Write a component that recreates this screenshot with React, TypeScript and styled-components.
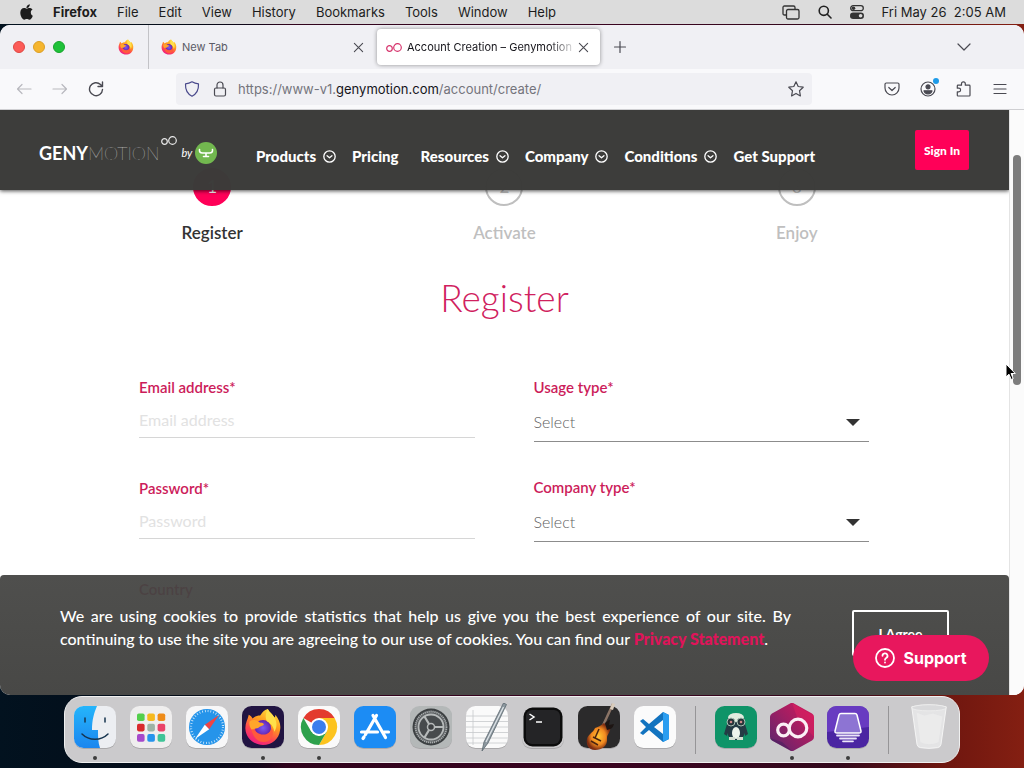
import React from "react";
import styled, { createGlobalStyle } from "styled-components";

const ui = `Inter, "Liberation Sans", sans-serif`;
const brand = `Lato, "Open Sans", sans-serif`;

const GlobalStyle = createGlobalStyle`
  *, *::before, *::after { box-sizing: border-box; }
  body { margin: 0; font-family: ${ui}; }
  button, input, select { font: inherit; color: inherit; border: 0; background: none; padding: 0; margin: 0; border-radius: 0; }
  a { color: inherit; text-decoration: none; }
  svg { display: block; flex: none; }
`;

/* ---------- Desktop and menu bar ---------- */

const Desktop = styled.div`
  display: flex;
  flex-direction: column;
  min-height: 100vh;
  padding-bottom: 5px;
  background: linear-gradient(90deg, #02121f 0%, #050c18 18%, #12081a 25%, #30031c 28%, #3a0420 60%, #34091c 82%, #6e160f 92%, #841f12 100%);
`;

const MenuBar = styled.header`
  display: flex;
  align-items: center;
  height: 24px;
  margin-bottom: 1px;
  padding: 0 18px 0 20px;
  background: #dcdcdc;
  color: #1c1c1c;
  font-size: 13px;
`;

const MenuList = styled.nav`
  display: flex;
  flex: 1;
  gap: 20px;
  margin-left: 20px;
`;

const MenuItem = styled.button<{ $strong?: boolean }>`
  font-weight: ${(p) => (p.$strong ? 700 : 400)};
`;

const StatusArea = styled.div`
  display: flex;
  align-items: center;
  gap: 18px;
  white-space: pre;
`;

/* ---------- Browser chrome ---------- */

const BrowserWindow = styled.main`
  display: flex;
  flex: 1;
  flex-direction: column;
  min-height: 0;
  overflow: hidden;
  border-radius: 10px;
  background: #fff;
`;

const TabStrip = styled.div`
  display: flex;
  align-items: center;
  height: 44px;
  background: #f0f0f4;
  font-size: 11px;
`;

const TrafficLights = styled.div`
  display: flex;
  gap: 8px;
  width: 104px;
  padding-left: 13px;
`;

const Light = styled.button<{ $color: string; $edge: string }>`
  width: 12px;
  height: 12px;
  border: 1px solid ${(p) => p.$edge};
  border-radius: 50%;
  background: ${(p) => p.$color};
`;

const PinnedTab = styled.button`
  display: grid;
  place-items: center;
  width: 45px;
  height: 44px;
  border-right: 1px solid #c3c3c7;
`;

const Tab = styled.div<{ $active?: boolean }>`
  display: flex;
  align-items: center;
  width: ${(p) => (p.$active ? 223 : 224)}px;
  height: 36px;
  margin-right: ${(p) => (p.$active ? 12 : 4)}px;
  padding: 0 ${(p) => (p.$active ? "11px 0 9px" : "9px 0 12px")};
  border-radius: 4px;
  background: ${(p) => (p.$active ? "#fff" : "transparent")};
  box-shadow: ${(p) => (p.$active ? "0 0 4px rgba(0, 0, 0, 0.4)" : "none")};
  color: ${(p) => (p.$active ? "#15141a" : "#5b5b66")};
`;

const TabTitle = styled.span<{ $fade?: boolean }>`
  flex: 1;
  margin: 0 4px 0 5px;
  overflow: hidden;
  white-space: nowrap;
  mask-image: ${(p) => (p.$fade ? "linear-gradient(90deg, #000 85%, transparent 102%)" : "none")};
`;

const IconButton = styled.button`
  display: grid;
  place-items: center;
  color: #4a4a52;
`;

const TabListButton = styled(IconButton)`
  margin-left: auto;
  margin-right: 52px;
`;

const Toolbar = styled.div`
  display: flex;
  align-items: center;
  gap: 72px;
  height: 41px;
  padding: 0 16px;
  border-bottom: 1px solid #cfcfd2;
  background: #f9f9fb;
`;

const ToolGroup = styled.div`
  display: flex;
  gap: 20px;
`;

const ToolButton = styled(IconButton)<{ $dim?: boolean }>`
  position: relative;
  width: 16px;
  height: 16px;
  color: ${(p) => (p.$dim ? "#b9b9be" : "#4a4a52")};
`;

const NoticeDot = styled.span`
  position: absolute;
  top: -3px;
  right: -3px;
  width: 6px;
  height: 6px;
  border-radius: 50%;
  background: #1e9be8;
`;

const AddressBar = styled.div`
  display: flex;
  flex: 1;
  align-items: center;
  gap: 12px;
  height: 32px;
  padding: 0 8px;
  border-radius: 4px;
  background: #f0f0f4;
`;

const Address = styled.div`
  flex: 1;
  margin-left: -2px;
  color: #74747c;
  font-size: 13px;
  white-space: nowrap;

  strong { color: #15141a; font-weight: 400; }
`;

/* ---------- Page ---------- */

const Viewport = styled.div`
  display: flex;
  flex: 1;
  min-height: 0;
`;

const Page = styled.div`
  position: relative;
  flex: 1;
  overflow: hidden;
  font-family: ${brand};
`;

const ScrollTrack = styled.div`
  width: 15px;
  padding: 45px 0 0 3px;
  border-left: 1px solid #e4e4e4;
  background: #fbfbfb;
`;

const ScrollThumb = styled.div`
  width: 8px;
  height: 230px;
  border-radius: 4px;
  background: #7d7d7d;
`;

const SiteHeader = styled.header`
  position: absolute;
  z-index: 1;
  top: 0;
  left: 0;
  right: 0;
  display: flex;
  align-items: center;
  height: 80px;
  padding: 0 40px 0 39px;
  background: rgba(59, 59, 57, 0.99);
  box-shadow: 0 1px 4px rgba(0, 0, 0, 0.7);
  color: #fff;
`;

const Logo = styled.a`
  display: flex;
  align-items: center;
  width: 217px;
  padding-top: 6px;
  font-size: 18px;
  line-height: 24px;
`;

const LogoBold = styled.span`
  font-weight: 700;
`;

const LogoThin = styled.span`
  font-weight: 200;
`;

const LogoRings = styled.span`
  align-self: flex-start;
  margin: -6px 4px 0 2px;
`;

const LogoBy = styled.em`
  margin-right: 3px;
  font-size: 11px;
`;

const SiteNav = styled.nav`
  display: flex;
  flex: 1;
  gap: 16px;
  padding-top: 12px;
  font-size: 15px;
  font-weight: 900;
  line-height: 20px;
  white-space: nowrap;
`;

const NavLink = styled.a`
  display: flex;
  align-items: center;
  padding-right: 6px;
`;

const NavMenu = styled.button`
  display: flex;
  align-items: center;
  gap: 7px;
`;

const SignIn = styled.button`
  width: 54px;
  height: 40px;
  border-radius: 2px;
  background: #ff0058;
  font-size: 12px;
  font-weight: 900;
`;

const Steps = styled.ol`
  display: grid;
  grid-template-columns: repeat(3, 1fr);
  margin: 0;
  padding: 58px 66px 0;
  list-style: none;
`;

const Step = styled.li<{ $active?: boolean }>`
  display: flex;
  flex-direction: column;
  align-items: center;
  gap: 17px;
  color: ${(p) => (p.$active ? "#333" : "#bfbfbf")};
  font-size: 17px;
  font-weight: 600;
  line-height: 20px;
`;

const StepNumber = styled.span<{ $active?: boolean }>`
  display: grid;
  place-items: center;
  width: 38px;
  height: 38px;
  border: 2px solid ${(p) => (p.$active ? "#ff0058" : "#bfbfbf")};
  border-radius: 50%;
  background: ${(p) => (p.$active ? "#ff0058" : "#fff")};
  color: ${(p) => (p.$active ? "#fff" : "#bfbfbf")};
  font-weight: 400;
`;

const Title = styled.h1`
  margin: 33px 0 57px;
  color: #d0215e;
  font-size: 37px;
  font-weight: 300;
  line-height: 44px;
  text-align: center;
`;

const Form = styled.form`
  display: grid;
  grid-template-columns: 1fr 1fr;
  gap: 59px;
  padding: 0 140px 0 139px;
`;

const Column = styled.div<{ $gap: number }>`
  display: flex;
  flex-direction: column;
  gap: ${(p) => p.$gap}px;
`;

const Field = styled.div`
  display: flex;
  flex-direction: column;
`;

const Label = styled.label`
  color: #cc1c5a;
  font-size: 15px;
  font-weight: 600;
  line-height: 20px;
`;

const TextInput = styled.input`
  width: 100%;
  height: 41px;
  padding-top: 5px;
  border-bottom: 1px solid #d6d6d6;
  font-size: 16px;

  &::placeholder { color: #e2e2e2; opacity: 1; }
`;

const SelectBox = styled.div`
  display: grid;
  align-items: center;

  > * { grid-area: 1 / 1; }
  > svg { justify-self: end; margin: 6px 9px 0 0; pointer-events: none; }
`;

const Select = styled.select`
  width: 100%;
  height: 45px;
  padding-top: 5px;
  appearance: none;
  border-bottom: 1px solid #8c8c8c;
  color: #5f5f5f;
  font-size: 16px;
  font-weight: 300;
`;

const CookieBar = styled.aside`
  position: absolute;
  left: 0;
  right: 0;
  bottom: 0;
  display: flex;
  align-items: flex-start;
  gap: 61px;
  height: 120px;
  padding: 29px 60px 0;
  border-radius: 4px 4px 0 0;
  background: linear-gradient(rgba(68, 68, 66, 0.94), rgba(66, 66, 64, 0.97));
  color: #fff;
`;

const CookieText = styled.p`
  flex: 1;
  margin: 0;
  font-size: 16px;
  font-weight: 500;
  line-height: 23px;
  text-align: justify;

  a { color: #e0135a; font-weight: 900; }
`;

const AgreeButton = styled.button`
  width: 97px;
  height: 46px;
  margin-top: 6px;
  border: 2px solid #fff;
  border-radius: 2px;
  font-size: 14px;
  font-weight: 700;
`;

const SupportButton = styled.button`
  position: absolute;
  right: 20px;
  bottom: 14px;
  display: flex;
  align-items: center;
  justify-content: center;
  gap: 8px;
  width: 136px;
  height: 46px;
  border-radius: 23px;
  background: #e8175d;
  color: #fff;
  font-family: Inter, sans-serif;
  font-size: 16px;
  font-weight: 700;
`;

const Pointer = styled.svg`
  position: absolute;
  z-index: 3;
  top: 363px;
  left: calc(100% - 19px);
`;

/* ---------- Dock ---------- */

const Dock = styled.nav`
  display: flex;
  align-self: center;
  align-items: center;
  height: 67px;
  margin-top: 1px;
  padding: 0 2px;
  border: 1px solid #f0f0f0;
  border-radius: 18px;
  background: #cbcacc;
`;

const DockItem = styled.button<{ $running?: boolean }>`
  display: flex;
  flex-direction: column;
  align-items: center;
  width: 56px;
  padding-top: 4px;

  &::after {
    content: "";
    width: 4px;
    height: 4px;
    margin-top: 5px;
    border-radius: 50%;
    background: ${(p) => (p.$running ? "#3d3d3d" : "transparent")};
  }
`;

const DockDivider = styled.span`
  width: 1px;
  height: 48px;
  margin: 0 12px;
  background: #969597;
`;

/* ---------- Drawings ---------- */

const Line = ({ size = 16, width = 1.2, children }: { size?: number; width?: number; children: React.ReactNode }) => (
  <svg width={size} height={size} viewBox="0 0 16 16" fill="none" stroke="currentColor" strokeWidth={width} strokeLinecap="round" strokeLinejoin="round">
    {children}
  </svg>
);

const Cross = () => <Line size={11} width={1.6}><path d="M2 2l12 12M14 2L2 14" /></Line>;

const AppleMark = () => (
  <svg width="13" height="16" viewBox="0 0 13 16" fill="#1c1c1c">
    <path d="M10.8 8.4c0-1.5 1-2.300 1.700-2.800-.7-1-1.800-1.500-3-1.500-1.200 0-2 .7-2.700.7-.7 0-1.600-.7-2.700-.7C2 4.200.3 5.900.3 8.800c0 3.200 2.100 6.900 4 6.900.9 0 1.400-.6 2.500-.6 1.100 0 1.500.6 2.500.6 1.500 0 2.900-2.200 3.500-4-1.300-.5-2-1.700-2-3.300zM8.900 2.900C9.500 2.200 9.900 1.300 9.800.3 8.800.4 7.900.9 7.300 1.600c-.6.7-1 1.500-.9 2.400 1 .1 1.900-.4 2.500-1.100z" />
  </svg>
);

const FirefoxMark = ({ size = 16 }: { size?: number }) => (
  <svg width={size} height={size} viewBox="0 0 40 40">
    <defs>
      <linearGradient id="foxBody" x1="0.8" y1="0" x2="0.3" y2="1">
        <stop offset="0" stopColor="#ffe63d" />
        <stop offset="0.4" stopColor="#ff9a1f" />
        <stop offset="0.7" stopColor="#ff4650" />
        <stop offset="1" stopColor="#ee1c84" />
      </linearGradient>
      <radialGradient id="foxGlobe">
        <stop offset="0" stopColor="#7a5cf5" />
        <stop offset="1" stopColor="#6422ad" />
      </radialGradient>
    </defs>
    <path fill="url(#foxBody)" d="M25 1c2 4 5 5 7 9 1-1 1-2 1-3 4 5 6 10 5 16-1 10-9 16-18 16S2 32 1.500 22C1 16 4 12 5 7c2 1 3 2 4 4 2-2 5-3 8-3 2-3 4-6 8-7z" />
    <circle cx="20" cy="21" r="8.500" fill="url(#foxGlobe)" />
    <path fill="#ffa62b" d="M6 14c3-2 7-2 10 1 2 1 4 0 5 2-1 2-5 2-6 4-3 1-5 0-6 3-3-3-4-7-3-10z" />
    <path fill="#ff5a3c" d="M8 22c4 1 6 6 12 6 5 0 8-3 9-7 3 5 1 11-4 14-8 3-16-3-17-13z" />
    <path fill="#ffe04a" d="M25 1c2 4 5 5 7 9 3 5 3 10 0 15-1-6-4-9-8-11-2-5-1-9 1-13z" />
  </svg>
);

const RingsMark = ({ color = "#d6336c" }: { color?: string }) => (
  <svg width="16" height="11" viewBox="0 0 16 11" fill="none" stroke={color} strokeWidth="1.2">
    <circle cx="3.500" cy="6.500" r="2.800" />
    <circle cx="11.500" cy="5.500" r="3.800" />
  </svg>
);

const CircleChevron = () => <Line size={13} width={1.6}><circle cx="8" cy="8" r="7" /><path d="M5 7l3 2.500L11 7" /></Line>;

const Tile = ({ fill, children }: { fill: string; children?: React.ReactNode }) => (
  <svg width="42" height="48" viewBox="0 -3 42 48">
    <rect y="1" width="42" height="42" rx="9.500" fill="#000" opacity=".16" />
    <rect width="42" height="42" rx="9.500" fill={fill} />
    {children}
  </svg>
);

const Finder = () => (
  <Tile fill="#eceef2">
    <linearGradient id="finderBlue" x1="0" y1="0" x2="0" y2="1">
      <stop offset="0" stopColor="#25b5fb" />
      <stop offset="1" stopColor="#1b86ef" />
    </linearGradient>
    <path fill="url(#finderBlue)" d="M9.500 0H23c-3 7-5 14-5 24h6c0 7 0 12 2 18H9.500A9.500 9.500 0 0 1 0 32.500v-23A9.500 9.500 0 0 1 9.500 0z" />
    <path fill="none" stroke="#16344f" strokeWidth="1.500" strokeLinecap="round" d="M11 12v4M31 12v4M8 28c7 7 19 7 26 0" />
  </Tile>
);

const launchpadColors = ["#54cf4c", "#f6b91e", "#ee8b18", "#d9292c", "#9eb3a5", "#ea4368", "#a64acb", "#2794ec", "#3fc497"];

const Launchpad = () => (
  <Tile fill="#efeeee">
    {launchpadColors.map((c, i) => (
      <rect key={c} x={7 + (i % 3) * 10.300} y={7.500 + Math.floor(i / 3) * 10.300} width="7.600" height="7.600" rx="1.800" fill={c} />
    ))}
  </Tile>
);

const Safari = () => (
  <Tile fill="#f7f7f8">
    <circle cx="21" cy="21" r="18" fill="#2594ea" />
    <circle cx="21" cy="21" r="16" fill="none" stroke="#d7ecfb" strokeWidth="2.200" strokeDasharray=".8 2" />
    <path fill="#ef4444" d="M33 9L18.800 18.800l4.400 4.400z" />
    <path fill="#fff" d="M9 33l14.200-9.800-4.400-4.400z" />
  </Tile>
);

const FirefoxApp = () => (
  <Tile fill="#211442"><g transform="translate(2 2)"><FirefoxMark size={38} /></g></Tile>
);

const Chrome = () => (
  <Tile fill="#fafafa">
    <path fill="#e33b2e" d="M21 21L5.400 12A18 18 0 0 1 36.600 12z" />
    <path fill="#fcc31e" d="M21 12h15.600A18 18 0 0 1 21 39L28.800 25.500z" />
    <path fill="#2da14c" d="M21 39A18 18 0 0 1 5.400 12L13.200 25.500 21 30l7.800-4.500z" />
    <circle cx="21" cy="21" r="9" fill="#fff" />
    <circle cx="21" cy="21" r="7" fill="#3b7ded" />
  </Tile>
);

const AppStore = () => (
  <Tile fill="#1c8cf4">
    <g fill="none" stroke="#fff" strokeWidth="3.200" strokeLinecap="round">
      <path d="M22.500 9.500L11.500 28.500M19 9.500l12.500 22M7.500 26h16M30 26h4.500M10 31l-1 1.500" />
    </g>
  </Tile>
);

const Settings = () => (
  <Tile fill="#b4b8b8">
    <circle cx="21" cy="21" r="18.500" fill="#3d4143" />
    <circle cx="21" cy="21" r="15.500" fill="#5b5f61" stroke="#a7abac" strokeWidth="1.800" strokeDasharray="1.300 .7" />
    <circle cx="21" cy="21" r="12.500" fill="#474b4d" stroke="#b6baba" strokeWidth="1.800" />
    <circle cx="21" cy="21" r="3.500" fill="#3e4143" stroke="#b6baba" strokeWidth="1.500" />
    <path stroke="#b6baba" strokeWidth="2.200" d="M24.500 21h9M19 18L14.500 10.500M19 24L14.500 31.500" />
  </Tile>
);

const TextEditApp = () => (
  <Tile fill="#fafafa">
    <path stroke="#c6c9cc" strokeWidth=".8" d="M0 10h42M0 15.500h42M0 21h42M0 26.500h42M0 32h42M0 37h42M7 4v35" />
    <path fill="#8d989f" stroke="#5b676f" strokeWidth=".8" d="M37.500-3l3 1.500L22 37l-6 8 2-9z" />
    <path stroke="#dfe5e9" strokeWidth="1.200" d="M37.500 1L20 36" />
  </Tile>
);

const TerminalApp = () => (
  <Tile fill="#cbcacc">
    <rect x="1.500" y="1.500" width="39" height="39" rx="9" fill="#0c0c0c" />
    <rect x="4" y="4" width="34" height="34" rx="6" fill="#242426" />
    <path fill="none" stroke="#fff" strokeWidth="1.500" d="M7.500 8l4.500 3-4.500 3M14 16h6" />
  </Tile>
);

const GarageBand = () => (
  <Tile fill="#2b2a2b">
    <radialGradient id="guitarBody">
      <stop offset="0" stopColor="#ffc533" />
      <stop offset=".6" stopColor="#f28a20" />
      <stop offset="1" stopColor="#7d2c12" />
    </radialGradient>
    <path stroke="#8b7466" strokeWidth="2.500" d="M35-2L22 26" />
    <path fill="#d9cbbb" d="M34-3l3 1-2 6-3-1z" />
    <path fill="url(#guitarBody)" d="M17 22c4-1 6-3 9-5 3 2 1 5 6 5 1 4-3 6-3 10 1 8-5 12-12 12S8 38 9 33c1-5 6-6 8-11z" />
    <path fill="#1d1513" d="M27 17c2-1 3-3 5-3l-1 5 5-1c-1 4-3 5-7 6z" />
    <path stroke="#4a2410" strokeWidth="1.500" d="M15 31l8 4M13 35l7 4M21 23l-4 9" />
  </Tile>
);

const Code = () => (
  <Tile fill="#fbfbfb">
    <path fill="#1273bf" d="M29 6l6 3v24l-6 3-14-12-6 5-3-2 6-6-6-6 3-2 6 5zM29 14l-9 7 9 7z" />
    <path fill="#2a9df0" d="M29 6l6 3v24l-6 3z" />
  </Tile>
);

const PenguinApp = () => (
  <Tile fill="#0f9468">
    <path fill="#243c45" d="M21 8c7 0 9 5 9 10l3 10-3 2v-3c-2 5-4 7-9 7s-7-2-9-7v3l-3-2 3-10c0-5 2-10 9-10z" />
    <ellipse cx="21" cy="11.500" rx="8" ry="4.500" fill="#e1ecdf" />
    <circle cx="16" cy="16" r="4" fill="#26363b" stroke="#a7bfb2" />
    <circle cx="26" cy="16" r="4" fill="#26363b" stroke="#a7bfb2" />
    <ellipse cx="21" cy="27" rx="4" ry="6" fill="#eef4ec" />
    <path fill="#d4dfd2" d="M14 31h6v3h-6zM22 31h6v3h-6z" />
    <circle cx="16" cy="16" r="1.300" fill="#c88" />
    <circle cx="26" cy="16" r="1.300" fill="#c88" />
  </Tile>
);

const GenymotionApp = () => (
  <svg width="46" height="48" viewBox="0 1 46 48">
    <linearGradient id="hexFill" x1="1" y1="0" x2="0" y2="1">
      <stop offset="0" stopColor="#d8185c" />
      <stop offset=".5" stopColor="#9c1f63" />
      <stop offset="1" stopColor="#57266f" />
    </linearGradient>
    <path fill="url(#hexFill)" d="M21 1.500q2-1.500 4 0l18 10q2 1 2 3.500v20q0 2.500-2 3.500l-18 10q-2 1.500-4 0l-18-10q-2-1-2-3.500V15q0-2.500 2-3.500z" />
    <path fill="#ed2561" opacity=".35" d="M23 1l22 13v21L29 18z" />
    <path fill="#3d1e5c" opacity=".45" d="M1 36l12 4 10 9L3 38.500z" />
    <g fill="none" stroke="#fbeff5" strokeWidth="3.200">
      <circle cx="14.500" cy="28" r="5.800" />
      <circle cx="29" cy="26" r="8.800" />
    </g>
  </svg>
);

const LampApp = () => (
  <Tile fill="#4b25a2">
    <path fill="#7544cf" opacity=".7" d="M9.500 0h23A9.500 9.500 0 0 1 42 9.500V21L0 26V9.500A9.500 9.500 0 0 1 9.500 0z" />
    <path fill="#8d74d3" stroke="#fff" strokeWidth="1.500" strokeLinejoin="round" d="M14 7.500h14q1.500 0 2 1.500l4 16q.3 2-2 2H10q-2.300 0-2-2l4-16q.5-1.500 2-1.500z" />
    <path stroke="#ece5fa" strokeWidth="1.800" strokeLinecap="round" d="M10 29.500h22M13 32.500h16M16 35.300h10" />
  </Tile>
);

const Trash = () => (
  <svg width="42" height="48" viewBox="0 0 42 50">
    <path fill="#e4e4e5" stroke="#f6f6f6" d="M3 4q18-4 36 0l-5.500 39q-.5 3-3.500 3.500-9 1.500-18 0-3-.5-3.500-3.500z" />
    <ellipse cx="21" cy="5" rx="18" ry="3.200" fill="#d9d9db" stroke="#ececec" />
    <path fill="#f1f1f2" opacity=".5" d="M8 10l8 3 9-2 10 3-4 27q-10 4-19 0z" />
  </svg>
);

/* ---------- App ---------- */

const menus = ["File", "Edit", "View", "History", "Bookmarks", "Tools", "Window", "Help"];

const navItems = [
  { label: "Products", menu: true },
  { label: "Pricing" },
  { label: "Resources", menu: true },
  { label: "Company", menu: true },
  { label: "Conditions", menu: true },
  { label: "Get Support" },
];

const dockApps = [
  { name: "Finder", Icon: Finder, running: true },
  { name: "Launchpad", Icon: Launchpad },
  { name: "Safari", Icon: Safari },
  { name: "Firefox", Icon: FirefoxApp, running: true },
  { name: "Chrome", Icon: Chrome, running: true },
  { name: "App Store", Icon: AppStore },
  { name: "System Preferences", Icon: Settings },
  { name: "TextEdit", Icon: TextEditApp },
  { name: "Terminal", Icon: TerminalApp },
  { name: "GarageBand", Icon: GarageBand },
  { name: "Visual Studio Code", Icon: Code },
];

const dockTools = [
  { name: "Penguin", Icon: PenguinApp },
  { name: "Genymotion", Icon: GenymotionApp, running: true },
  { name: "Lamp", Icon: LampApp, running: true },
];

const SelectField = ({ id, label }: { id: string; label: string }) => (
  <Field>
    <Label htmlFor={id}>{label}</Label>
    <SelectBox>
      <Select id={id}><option>Select</option></Select>
      <svg width="14" height="7" viewBox="0 0 14 7" fill="#333"><path d="M0 0h14L7 7z" /></svg>
    </SelectBox>
  </Field>
);

export default function App() {
  return (
    <Desktop>
      <GlobalStyle />
      <MenuBar>
        <AppleMark />
        <MenuList>
          <MenuItem $strong>Firefox</MenuItem>
          {menus.map((m) => <MenuItem key={m}>{m}</MenuItem>)}
        </MenuList>
        <StatusArea>
          <svg width="18" height="15" viewBox="0 0 18 15" fill="none" stroke="#333" strokeWidth="1.300">
            <path d="M4 10H2.500Q1 10 1 8.500v-6Q1 1 2.500 1h9Q13 1 13 2.500V4" />
            <rect x="4.500" y="4.500" width="12.500" height="9.500" rx="1.500" />
          </svg>
          <svg width="14" height="14" viewBox="0 0 14 14" fill="none" stroke="#222" strokeWidth="1.600" strokeLinecap="round">
            <circle cx="5.800" cy="5.800" r="4.600" /><path d="M9.300 9.300L13 13" />
          </svg>
          <svg width="14" height="14" viewBox="0 0 14 14">
            <rect x=".7" y=".7" width="12.600" height="5" rx="2.500" fill="none" stroke="#333" strokeWidth="1.300" />
            <circle cx="3.500" cy="3.200" r="1.800" fill="#333" />
            <rect y="7.500" width="14" height="6.500" rx="3.200" fill="#333" />
            <circle cx="10.600" cy="10.800" r="1.800" fill="#dcdcdc" />
          </svg>
          <span>Fri May 26{"  "}2:05 AM</span>
        </StatusArea>
      </MenuBar>

      <BrowserWindow>
        <TabStrip>
          <TrafficLights>
            <Light aria-label="Close" $color="#fc5b57" $edge="#df4744" />
            <Light aria-label="Minimize" $color="#f5b52e" $edge="#dc9f25" />
            <Light aria-label="Zoom" $color="#1fc139" $edge="#17a42c" />
          </TrafficLights>
          <PinnedTab aria-label="Firefox View"><FirefoxMark /></PinnedTab>
          <Tab>
            <FirefoxMark />
            <TabTitle>New Tab</TabTitle>
            <IconButton aria-label="Close tab"><Cross /></IconButton>
          </Tab>
          <Tab $active>
            <RingsMark />
            <TabTitle $fade>Account Creation – Genymotion</TabTitle>
            <IconButton aria-label="Close tab"><Cross /></IconButton>
          </Tab>
          <IconButton aria-label="New tab"><Line><path d="M8 2.500v11M2.500 8h11" /></Line></IconButton>
          <TabListButton aria-label="List all tabs"><Line><path d="M2 5l6 6 6-6" /></Line></TabListButton>
        </TabStrip>

        <Toolbar>
          <ToolGroup>
            <ToolButton $dim aria-label="Back"><Line><path d="M15 8H1.500M6 3.500L1.500 8 6 12.500" /></Line></ToolButton>
            <ToolButton $dim aria-label="Forward"><Line><path d="M1 8h13.500M10 3.500L14.500 8 10 12.500" /></Line></ToolButton>
            <ToolButton aria-label="Reload"><Line width={1.4}><path d="M14.500 8.500A6.500 6.500 0 1 1 12.500 3.500L14 5M14.500 1v4.500H10" /></Line></ToolButton>
          </ToolGroup>
          <AddressBar>
            <ToolButton aria-label="Tracking protection"><Line><path stroke="#4a4a8c" d="M8 .8c2 1.200 4 1.800 6.500 2 .3 6-2 10.200-6.500 12.400C3.500 13 1.200 8.800 1.500 2.800 4 2.600 6 2 8 .8z" /></Line></ToolButton>
            <ToolButton aria-label="Connection secure"><Line><rect x="2.500" y="7" width="11" height="8" rx="1.500" /><path d="M5 7V4a3 3 0 0 1 6 0v3" /></Line></ToolButton>
            <Address role="textbox" aria-label="Address">https://www-v1.<strong>genymotion.com</strong>/account/create/</Address>
            <ToolButton aria-label="Bookmark"><Line><path d="M8 .8l2.200 4.700 5 .7-3.700 3.500.9 5.200L8 12.400l-4.400 2.500.9-5.200L.8 6.200l5-.7z" /></Line></ToolButton>
          </AddressBar>
          <ToolGroup>
            <ToolButton aria-label="Pocket"><Line><path d="M2.300 2h11.400q1.300 0 1.300 1.300V7A7 7 0 0 1 1 7V3.300Q1 2 2.300 2zM4.800 6.500L8 9.500l3.200-3" /></Line></ToolButton>
            <ToolButton aria-label="Account">
              <Line><circle cx="8" cy="8" r="7" /><circle cx="8" cy="5.800" r="2" fill="currentColor" /><path fill="currentColor" d="M4 9.800h8c-.5 2-2 3-4 3s-3.500-1-4-3z" /></Line>
              <NoticeDot />
            </ToolButton>
            <ToolButton aria-label="Extensions"><Line><path d="M2 15q-.7 0-.7-.8v-3.400h1.500a1.800 1.800 0 0 0 0-3.600H1.300V5q0-.8.7-.8h3.500V2.800a1.900 1.900 0 0 1 3.800 0v1.400h3.900q.8 0 .8.800v9.200q0 .8-.8.800z" /></Line></ToolButton>
            <ToolButton aria-label="Application menu"><Line><path d="M2 3.500h12M2 8h12M2 12.500h12" /></Line></ToolButton>
          </ToolGroup>
        </Toolbar>

        <Viewport>
          <Page>
            <SiteHeader>
              <Logo href="#">
                <LogoBold>GENY</LogoBold><LogoThin>MOTION</LogoThin>
                <LogoRings><RingsMark color="#e8e8e8" /></LogoRings>
                <LogoBy>by</LogoBy>
                <svg width="22" height="22" viewBox="0 0 22 22">
                  <circle cx="11" cy="11" r="11" fill="#72b84f" />
                  <path fill="none" stroke="#fff" strokeWidth="1.600" strokeLinecap="round" strokeLinejoin="round" d="M4.500 7.500q-.5 3.500 3 3.500h7q3.500 0 3-3.500M11 11v3.500M8.500 14.500h5" />
                </svg>
              </Logo>
              <SiteNav>
                {navItems.map((n) =>
                  n.menu ? (
                    <NavMenu key={n.label}>{n.label}<CircleChevron /></NavMenu>
                  ) : (
                    <NavLink key={n.label} href="#">{n.label}</NavLink>
                  )
                )}
              </SiteNav>
              <SignIn>Sign In</SignIn>
            </SiteHeader>

            <Steps>
              <Step $active><StepNumber $active>1</StepNumber>Register</Step>
              <Step><StepNumber>2</StepNumber>Activate</Step>
              <Step><StepNumber>3</StepNumber>Enjoy</Step>
            </Steps>
            <Title>Register</Title>
            <Form>
              <Column $gap={40}>
                <Field>
                  <Label htmlFor="email">Email address*</Label>
                  <TextInput id="email" type="email" placeholder="Email address" />
                </Field>
                <Field>
                  <Label htmlFor="password">Password*</Label>
                  <TextInput id="password" type="password" placeholder="Password" />
                </Field>
                <Label as="span">Country</Label>
              </Column>
              <Column $gap={35}>
                <SelectField id="usage" label="Usage type*" />
                <SelectField id="company" label="Company type*" />
              </Column>
            </Form>

            <CookieBar>
              <CookieText>
                We are using cookies to provide statistics that help us give you the best experience of our site. By
                continuing to use the site you are agreeing to our use of cookies. You can find our <a href="#">Privacy Statement</a>.
              </CookieText>
              <AgreeButton>I Agree</AgreeButton>
            </CookieBar>
            <SupportButton>
              <svg width="20" height="20" viewBox="0 0 20 20" fill="none" stroke="#fff" strokeWidth="1.800" strokeLinecap="round">
                <circle cx="10" cy="10" r="9" />
                <path d="M7.500 7.800a2.500 2.500 0 1 1 3.700 2.200q-1.200.7-1.200 1.800M10 14.500v.1" />
              </svg>
              Support
            </SupportButton>
          </Page>
          <ScrollTrack><ScrollThumb /></ScrollTrack>
        </Viewport>
      </BrowserWindow>

      <Dock aria-label="Dock">
        {dockApps.map(({ name, Icon, running }) => (
          <DockItem key={name} aria-label={name} $running={running}><Icon /></DockItem>
        ))}
        <DockDivider />
        {dockTools.map(({ name, Icon, running }) => (
          <DockItem key={name} aria-label={name} $running={running}><Icon /></DockItem>
        ))}
        <DockDivider />
        <DockItem aria-label="Trash"><Trash /></DockItem>
      </Dock>

      <Pointer width="12" height="18" viewBox="0 0 12 18">
        <path fill="#000" stroke="#fff" d="M1 1v13l3-2.800 2.200 5.300 2-.9L6 10.500h4.300z" />
      </Pointer>
    </Desktop>
  );
}
